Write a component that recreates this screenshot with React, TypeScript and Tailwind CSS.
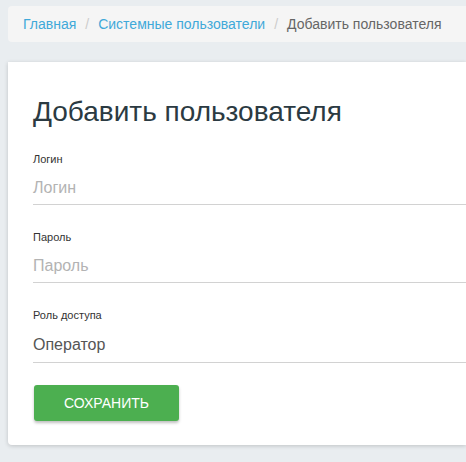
export default function App() {
  const fields = [
    { label: 'Логин', placeholder: 'Логин', value: '' },
    { label: 'Пароль', placeholder: 'Пароль', value: '' },
    { label: 'Роль доступа', placeholder: '', value: 'Оператор' },
  ]

  return (
    <div className="min-h-[462px] bg-[#e9edf0] pl-2 pt-[6px] pb-4 font-['Liberation_Sans',Arial,sans-serif]">
      {/* Breadcrumb */}
      <nav className="flex h-9 items-center rounded-l bg-[#f5f5f5] pl-[15px] text-[14px] whitespace-nowrap">
        <a className="text-[#3fa9d9]">Главная</a>
        <span className="px-[9px] text-[#ccc]">/</span>
        <a className="text-[#3fa9d9]">Системные пользователи</a>
        <span className="px-[9px] text-[#ccc]">/</span>
        <span className="text-[#666]">Добавить пользователя</span>
      </nav>

      {/* Card */}
      <div className="mt-5 h-[383px] rounded-bl bg-white pl-[25px] pt-[34px] shadow-[0_1px_4px_rgba(0,0,0,0.18)]">
        <h1 className="text-[28px] leading-[32px] text-[#2b3a42] whitespace-nowrap">Добавить пользователя</h1>

        <div className="mt-[24px] flex flex-col gap-[25px]">
          {fields.map((f) => (
            <div key={f.label}>
              <div className="text-[11px] leading-[14px] text-[#333]">{f.label}</div>
              {f.value ? (
                <div className="mt-[6px] flex h-[35px] items-center border-b border-[#d2d2d2] text-[16px]">
                  <span className="text-[#555]">{f.value}</span>
                </div>
              ) : (
                <div className="mt-[6px] flex h-[33px] items-center border-b border-[#d2d2d2] text-[16px]">
                  <span className="text-[#b3b3b3]">{f.placeholder}</span>
                </div>
              )}
            </div>
          ))}
        </div>

        <button className="ml-[1px] mt-[22px] h-9 w-[145px] rounded-[3px] bg-[#4caf50] text-[14px] text-white shadow-[0_2px_3px_rgba(0,0,0,0.25)]">
          СОХРАНИТЬ
        </button>
      </div>
    </div>
  )
}
